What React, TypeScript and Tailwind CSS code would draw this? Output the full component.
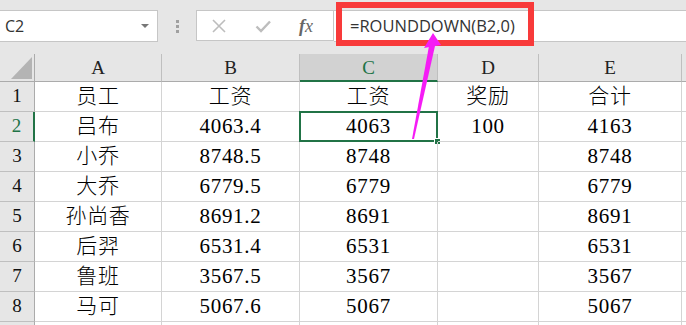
import React from 'react';

const cellFont = { fontFamily: '"Liberation Serif", "Noto Sans CJK SC", serif' };
const uiFont = { fontFamily: '"Open Sans", "Liberation Sans", sans-serif' };

const cols = ['A', 'B', 'C', 'D', 'E'];

const rows: string[][] = [
    ['员工', '工资', '工资', '奖励', '合计'],
    ['吕布', '4063.4', '4063', '100', '4163'],
    ['小乔', '8748.5', '8748', '', '8748'],
    ['大乔', '6779.5', '6779', '', '6779'],
    ['孙尚香', '8691.2', '8691', '', '8691'],
    ['后羿', '6531.4', '6531', '', '6531'],
    ['鲁班', '3567.5', '3567', '', '3567'],
    ['马可', '5067.6', '5067', '', '5067'],
];

export default function App() {
    return (
        <div className="relative w-[686px] h-[325px] overflow-hidden bg-white">
            {/* Formula bar */}
            <div className="h-[54px] bg-[#e6e6e6] flex items-start pt-[10px]">
                <div
                    className="w-[158px] h-[32px] bg-white border border-l-0 border-[#c6c6c6] flex items-center justify-between pl-[5px] pr-[8px] text-[16px] text-[#333]"
                    style={uiFont}
                >
                    <span>C2</span>
                    <span className="w-0 h-0 border-l-[4px] border-r-[4px] border-t-[4px] border-l-transparent border-r-transparent border-t-[#777]" />
                </div>
                <div className="w-[38px] h-[32px] flex flex-col items-center justify-center gap-[2px] pl-[1px]">
                    <span className="w-[3px] h-[3px] bg-[#a0a0a0]" />
                    <span className="w-[3px] h-[3px] bg-[#a0a0a0]" />
                    <span className="w-[3px] h-[3px] bg-[#a0a0a0]" />
                </div>
                <div className="w-[138px] h-[31px] bg-white border border-[#c6c6c6] flex items-center">
                    <svg className="ml-[14px]" width="16" height="16" viewBox="0 0 16 16">
                        <path d="M2 2 L14 14 M14 2 L2 14" stroke="#bdbdbd" strokeWidth="1.6" fill="none" />
                    </svg>
                    <svg className="ml-[28px]" width="16" height="16" viewBox="0 0 16 16">
                        <path d="M1.5 8.5 L6 13 L15 3.5" stroke="#bdbdbd" strokeWidth="2.4" fill="none" />
                    </svg>
                    <span
                        className="ml-[28px] italic text-[18px] text-[#666] leading-none"
                        style={{ fontFamily: '"Liberation Serif", serif' }}
                    >
                        <span className="font-bold">f</span>x
                    </span>
                </div>
                <div
                    className="flex-1 h-[32px] bg-white border-y border-[#c6c6c6] flex items-center pl-[16px] text-[16.5px] text-[#333]"
                    style={uiFont}
                >
                    =ROUNDDOWN(B2,0)
                </div>
            </div>

            {/* Grid */}
            <div className="grid grid-cols-[35px_127px_138px_138px_101px_143px_1fr] grid-rows-[28px_repeat(8,30px)_30px]">
                <div className="relative bg-[#e6e6e6] border-r border-b border-[#ababab]">
                    <svg className="absolute left-[11px] top-[3px]" width="21" height="22" viewBox="0 0 21 22">
                        <polygon points="21,0 21,22 0,22" fill="#b4b4b4" />
                    </svg>
                </div>
                {cols.map((c) => (
                    <div
                        key={c}
                        className={
                            c === 'C'
                                ? 'bg-[#d2d2d2] border-r border-[#bfbfbf] border-b-2 border-b-[#217346] flex items-center justify-center text-[19px] text-[#217346] pt-[2px]'
                                : 'bg-[#e6e6e6] border-r border-[#bfbfbf] border-b border-b-[#ababab] flex items-center justify-center text-[19px] text-[#222] pt-[2px]'
                        }
                        style={cellFont}
                    >
                        {c}
                    </div>
                ))}
                <div className="bg-[#e6e6e6] border-b border-[#ababab]" />

                {rows.map((r, i) => (
                    <React.Fragment key={i}>
                        <div
                            className={
                                i === 1
                                    ? 'bg-[#e6e6e6] border-r-2 border-r-[#217346] border-b border-b-[#bfbfbf] flex items-center justify-center text-[19px] text-[#217346]'
                                    : 'bg-[#e6e6e6] border-r border-r-[#ababab] border-b border-b-[#bfbfbf] flex items-center justify-center text-[19px] text-[#111]'
                            }
                            style={cellFont}
                        >
                            {i + 1}
                        </div>
                        {r.map((v, j) => (
                            <div
                                key={j}
                                className="relative border-r border-b border-[#d4d4d4] flex items-center justify-center text-[21px] font-light text-black tracking-[0.7px]"
                                style={cellFont}
                            >
                                {v}
                                {i === 1 && j === 2 && (
                                    <div className="absolute -left-px -top-px right-[-1px] bottom-[-1px] border-2 border-[#217346]">
                                        <div className="absolute right-[-5px] bottom-[-5px] w-[7px] h-[7px] bg-[#217346] border border-white" />
                                    </div>
                                )}
                            </div>
                        ))}
                        <div className="border-b border-[#d4d4d4]" />
                    </React.Fragment>
                ))}
                <div className="bg-[#e6e6e6] border-r border-[#ababab]" />
                <div className="border-r border-[#d4d4d4]" />
                <div className="border-r border-[#d4d4d4]" />
                <div className="border-r border-[#d4d4d4]" />
                <div className="border-r border-[#d4d4d4]" />
                <div className="border-r border-[#d4d4d4]" />
                <div />
            </div>

            {/* Annotation: red box and magenta arrow */}
            <div className="absolute left-[336px] top-[2px] w-[198px] h-[44px] border-[6px] border-[#f83a3a]" />
            <svg className="absolute left-0 top-0 pointer-events-none" width="686" height="325" viewBox="0 0 686 325">
                <polygon points="412,139 414,139 435,46 429,46" fill="#f51cf5" />
                <polygon points="424,48 433,33 441,45" fill="#f51cf5" />
            </svg>
        </div>
    );
}
